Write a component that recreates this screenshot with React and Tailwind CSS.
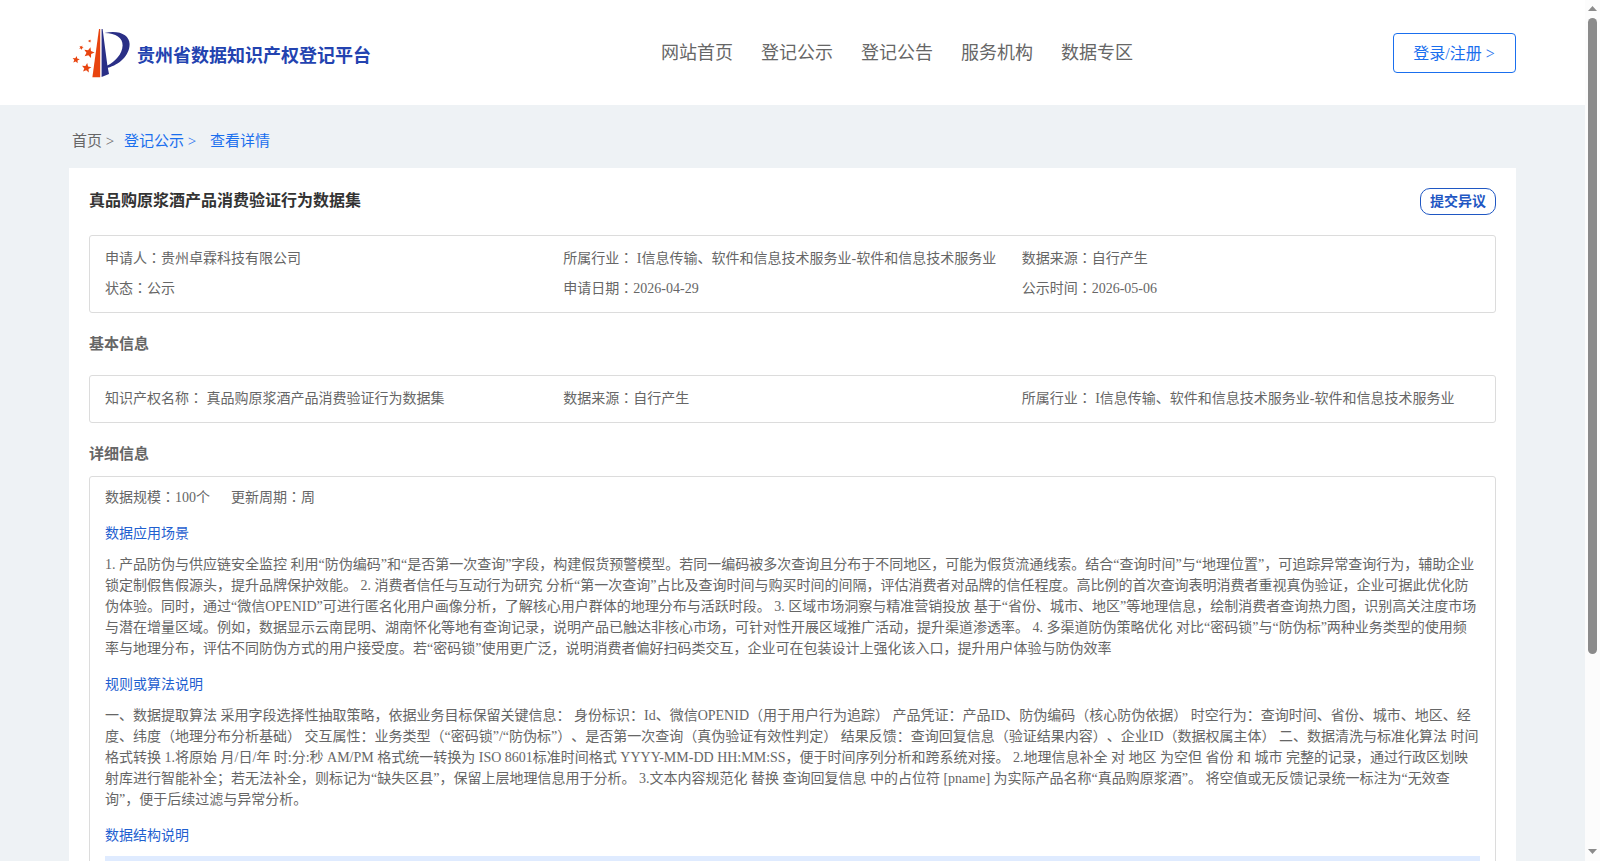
import React from "react";

const NAV = ["网站首页", "登记公示", "登记公告", "服务机构", "数据专区"];

const SUMMARY = [
  "申请人：贵州卓霖科技有限公司",
  "所属行业： I信息传输、软件和信息技术服务业-软件和信息技术服务业",
  "数据来源：自行产生",
  "状态：公示",
  "申请日期：2026-04-29",
  "公示时间：2026-05-06",
];

const BASIC = [
  "知识产权名称： 真品购原浆酒产品消费验证行为数据集",
  "数据来源：自行产生",
  "所属行业： I信息传输、软件和信息技术服务业-软件和信息技术服务业",
];

const SECTIONS = [
  {
    title: "数据应用场景",
    text: "1. 产品防伪与供应链安全监控 利用“防伪编码”和“是否第一次查询”字段，构建假货预警模型。若同一编码被多次查询且分布于不同地区，可能为假货流通线索。结合“查询时间”与“地理位置”，可追踪异常查询行为，辅助企业锁定制假售假源头，提升品牌保护效能。 2. 消费者信任与互动行为研究 分析“第一次查询”占比及查询时间与购买时间的间隔，评估消费者对品牌的信任程度。高比例的首次查询表明消费者重视真伪验证，企业可据此优化防伪体验。同时，通过“微信OPENID”可进行匿名化用户画像分析，了解核心用户群体的地理分布与活跃时段。 3. 区域市场洞察与精准营销投放 基于“省份、城市、地区”等地理信息，绘制消费者查询热力图，识别高关注度市场与潜在增量区域。例如，数据显示云南昆明、湖南怀化等地有查询记录，说明产品已触达非核心市场，可针对性开展区域推广活动，提升渠道渗透率。 4. 多渠道防伪策略优化 对比“密码锁”与“防伪标”两种业务类型的使用频率与地理分布，评估不同防伪方式的用户接受度。若“密码锁”使用更广泛，说明消费者偏好扫码类交互，企业可在包装设计上强化该入口，提升用户体验与防伪效率",
  },
  {
    title: "规则或算法说明",
    text: "一、数据提取算法 采用字段选择性抽取策略，依据业务目标保留关键信息： 身份标识：Id、微信OPENID（用于用户行为追踪） 产品凭证：产品ID、防伪编码（核心防伪依据） 时空行为：查询时间、省份、城市、地区、经度、纬度（地理分布分析基础） 交互属性：业务类型（“密码锁”/“防伪标”）、是否第一次查询（真伪验证有效性判定） 结果反馈：查询回复信息（验证结果内容）、企业ID（数据权属主体） 二、数据清洗与标准化算法 时间格式转换 1.将原始 月/日/年 时:分:秒 AM/PM 格式统一转换为 ISO 8601标准时间格式 YYYY-MM-DD HH:MM:SS，便于时间序列分析和跨系统对接。 2.地理信息补全 对 地区 为空但 省份 和 城市 完整的记录，通过行政区划映射库进行智能补全；若无法补全，则标记为“缺失区县”，保留上层地理信息用于分析。 3.文本内容规范化 替换 查询回复信息 中的占位符 [pname] 为实际产品名称“真品购原浆酒”。 将空值或无反馈记录统一标注为“无效查询”，便于后续过滤与异常分析。",
  },
];

// In label/value pairs the full-width colon sits in the middle of its cell.
function Pair({ text }) {
  return text.split(/(：)/).map((part, i) =>
    i % 2 ? (
      <span key={i} lang="ko" className="font-['Liberation_Serif','Noto_Sans_CJK_KR',serif]">
        {part}
      </span>
    ) : (
      part
    )
  );
}

function Star({ x, y, r, rot = 0 }) {
  const pts = Array.from({ length: 10 }, (_, i) => {
    const a = ((rot - 90 + i * 36) * Math.PI) / 180;
    const d = i % 2 ? r * 0.45 : r;
    return `${(x + d * Math.cos(a)).toFixed(2)},${(y + d * Math.sin(a)).toFixed(2)}`;
  }).join(" ");
  return <polygon points={pts} fill="#e8440f" />;
}

function Logo() {
  return (
    <svg className="h-[50px] w-[58px] shrink-0" viewBox="0 0 58 50">
      <path d="M27 1 L28.2 1 L28.2 49.2 L20.4 49.2 Z" fill="#e8440f" />
      <path
        d="M29.6 1 L30.6 1 L33.2 21 L35.4 37.4 C43 34 50.3 26 50.6 17.5 C50.8 9.5 44 5.4 32.5 5 C47 1.6 57.6 7 57.6 16 C57.6 27.5 47.5 36.6 35.8 39.8 L37 46 L29.6 49 Z"
        fill="#2a2f86"
      />
      <Star x={17} y={24.7} r={5.6} rot={15} />
      <Star x={4} y={31.8} r={3.8} rot={10} />
      <Star x={14.5} y={40} r={5} rot={8} />
      <Star x={9.3} y={19.6} r={2.4} rot={25} />
      <Star x={17.7} y={13} r={1.7} rot={20} />
    </svg>
  );
}

function Scrollbar() {
  return (
    <div className="flex h-full w-[15px] shrink-0 flex-col items-center bg-[#fcfcfc]">
      <svg className="h-[18px] w-[15px] shrink-0" viewBox="0 0 15 18">
        <path d="M3 11 L7.5 6 L12 11 Z" fill="#8b8b8b" />
      </svg>
      <div className="h-[636px] w-[9px] rounded-full bg-[#8b8b8b]" />
      <svg className="mt-auto h-[18px] w-[15px] shrink-0" viewBox="0 0 15 18">
        <path d="M3 6 L12 6 L7.5 11 Z" fill="#8b8b8b" />
      </svg>
    </div>
  );
}

function InfoGrid({ items, className }) {
  return (
    <div className={`grid grid-cols-3 rounded-[3px] border border-[#dcdcdc] px-[15px] py-2 ${className}`}>
      {items.map((t) => (
        <div key={t} className="h-[30px] whitespace-nowrap leading-[30px]">
          <Pair text={t} />
        </div>
      ))}
    </div>
  );
}

export default function App() {
  return (
    <div
      lang="zh-CN"
      className="flex h-[861px] w-[1600px] overflow-hidden bg-[#eef2f5] font-['Liberation_Serif','Noto_Sans_CJK_SC',serif] text-sm text-[#666] [text-spacing-trim:space-all]"
    >
      <div className="h-full w-[1585px]">
        <header className="flex h-[105px] items-start bg-white pr-[69px] pl-[72px]">
          <div className="flex items-center gap-[7px] pt-[28px]">
            <Logo />
            <h1 className="mt-[6px] text-[18px] leading-[26px] font-bold text-[#2343b0]">贵州省数据知识产权登记平台</h1>
          </div>
          <nav className="ml-[290px] flex gap-7 pt-[39px] text-[18px] leading-[28px]">
            {NAV.map((n) => (
              <a key={n}>{n}</a>
            ))}
          </nav>
          <button className="mt-[33px] ml-auto h-10 w-[123px] rounded-[4px] border border-[#1a6fee] pt-[2px] pr-px text-[16px] text-[#1a6fee]">
            登录/注册 &gt;
          </button>
        </header>

        <div className="flex h-[63px] items-center pt-[11px] pl-[72px] text-[15px]">
          <span className="w-[52px]">首页 &gt;</span>
          <span className="w-[86px] text-[#1a6fee]">登记公示 &gt;</span>
          <span className="text-[#1a6fee]">查看详情</span>
        </div>

        <main className="mx-[69px] h-[720px] bg-white px-5 pt-5">
          <div className="flex h-[47px] items-start justify-between">
            <h2 className="text-[16px] leading-[26px] font-bold text-[#333]">真品购原浆酒产品消费验证行为数据集</h2>
            <button className="h-[27px] w-[76px] rounded-[10px] border border-[#1f57c3] text-sm font-bold text-[#1f57c3]">
              提交异议
            </button>
          </div>
          <InfoGrid items={SUMMARY} className="h-[78px]" />
          <h3 className="h-[62px] text-[15px] leading-[62px] font-bold">基本信息</h3>
          <InfoGrid items={BASIC} className="h-[48px]" />
          <h3 className="h-[53px] text-[15px] leading-[62px] font-bold">详细信息</h3>
          <section className="h-[450px] rounded-[3px] border border-[#dcdcdc] px-[15px] pt-[10px]">
            <div className="flex gap-[21px] leading-[21px]">
              <span>
                <Pair text="数据规模：100个" />
              </span>
              <span>
                <Pair text="更新周期：周" />
              </span>
            </div>
            {SECTIONS.map((s) => (
              <div key={s.title}>
                <h4 className="mt-[15px] leading-[21px] text-[#1f5fd0]">{s.title}</h4>
                <p className="mt-[10px] leading-[21px]">{s.text}</p>
              </div>
            ))}
            <h4 className="mt-[15px] leading-[21px] text-[#1f5fd0]">数据结构说明</h4>
            <div className="mt-[10px] h-10 bg-[#dfebff]" />
          </section>
        </main>
      </div>
      <Scrollbar />
    </div>
  );
}
